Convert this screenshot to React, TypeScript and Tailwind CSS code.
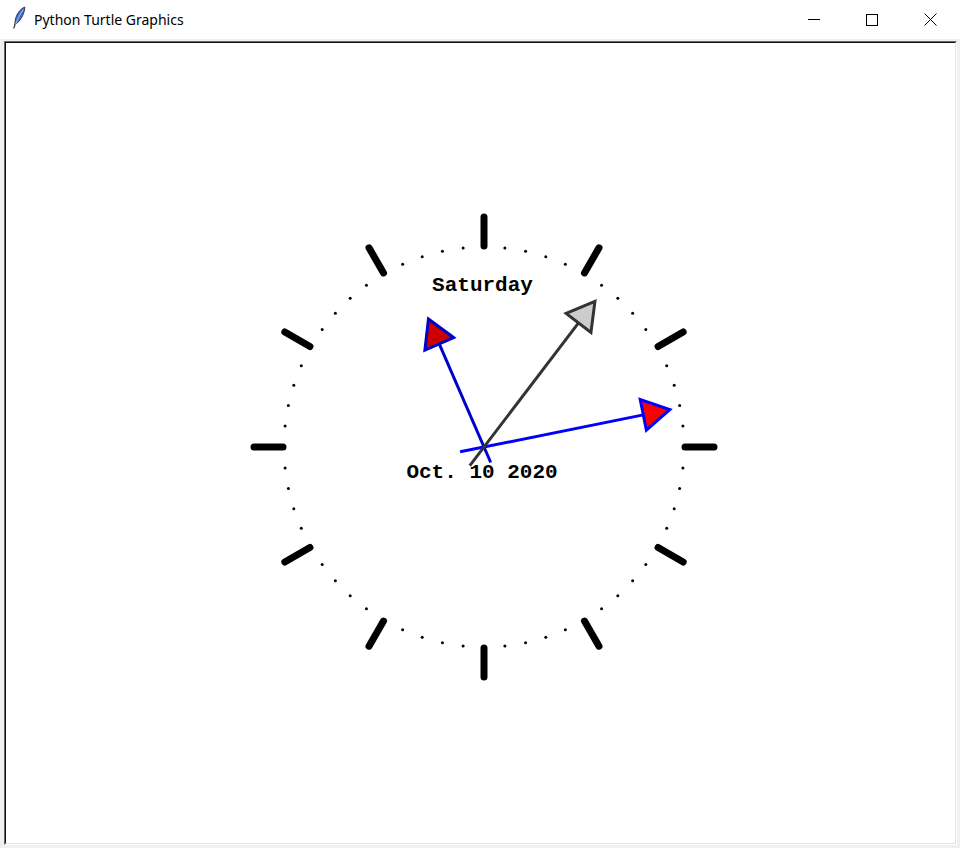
import React from "react";

const cx = 484;
const cy = 447;

type Hand = {
  angle: number;
  length: number;
  fill: string;
  outline: string;
};

// 11:13:06 on the face
const hands: Hand[] = [
  { angle: 336.55, length: 112.5, fill: "#cd0000", outline: "#0000cd" },
  { angle: 78.6, length: 162.5, fill: "#ff0000", outline: "#0000ff" },
  { angle: 37.3, length: 156, fill: "#cccccc", outline: "#333333" },
];

const tip = 31.25;

function HandShape({ hand }: { hand: Hand }) {
  const rad = (hand.angle * Math.PI) / 180;
  const dx = Math.sin(rad);
  const dy = -Math.cos(rad);
  const px = Math.cos(rad);
  const py = Math.sin(rad);
  const tailX = cx - hand.length * 0.15 * dx;
  const tailY = cy - hand.length * 0.15 * dy;
  const midX = cx + hand.length * dx;
  const midY = cy + hand.length * dy;
  const h = (tip * Math.sqrt(3)) / 2;
  const pts = [
    [midX + (tip / 2) * px, midY + (tip / 2) * py],
    [midX + h * dx, midY + h * dy],
    [midX - (tip / 2) * px, midY - (tip / 2) * py],
  ]
    .map((p) => p.join(","))
    .join(" ");

  return (
    <g stroke={hand.outline} strokeWidth={3}>
      <line x1={tailX} y1={tailY} x2={midX} y2={midY} />
      <polygon points={pts} fill={hand.fill} strokeLinejoin="miter" />
    </g>
  );
}

function ClockFace() {
  const marks = [];
  for (let i = 0; i < 60; i++) {
    const rad = (i * 6 * Math.PI) / 180;
    const sx = Math.sin(rad);
    const sy = -Math.cos(rad);
    if (i % 5 === 0) {
      marks.push(
        <line
          key={i}
          x1={cx + 201 * sx}
          y1={cy + 201 * sy}
          x2={cx + 230 * sx}
          y2={cy + 230 * sy}
          stroke="#000"
          strokeWidth={7}
          strokeLinecap="round"
        />
      );
    } else {
      marks.push(<circle key={i} cx={cx + 200 * sx} cy={cy + 200 * sy} r={1.5} fill="#000" />);
    }
  }
  return <g>{marks}</g>;
}

function Feather() {
  return (
    <svg width="14" height="24" viewBox="0 0 14 24" className="shrink-0">
      <path
        d="M12.8 1 C8 3 4.2 8.5 3.2 14.5 L2.8 19 L5.2 17 C9.6 12.8 12.6 7 12.8 1 Z"
        fill="#3d6fc4"
        stroke="#23385e"
        strokeWidth="1"
      />
      <path d="M11.4 3.5 C8.2 8 5.4 13 3.4 19" stroke="#c9d8f2" strokeWidth="0.8" fill="none" />
      <path d="M3.2 18.5 L1.6 22.5" stroke="#333" strokeWidth="1.2" />
    </svg>
  );
}

export default function App() {
  return (
    <div className="flex h-[848px] w-[960px] flex-col bg-white">
      <div className="flex h-[39px] shrink-0 items-center bg-white">
        <div className="ml-[12px] mt-[-3px]">
          <Feather />
        </div>
        <span
          className="ml-[8px] text-[14px] text-black"
          style={{ fontFamily: '"Noto Sans", "Open Sans", sans-serif' }}
        >
          Python Turtle Graphics
        </span>
        <div className="ml-auto flex h-full">
          <div className="flex h-full w-[58px] items-center justify-center">
            <div className="h-px w-[12px] bg-black" />
          </div>
          <div className="flex h-full w-[58px] items-center justify-center">
            <div className="h-[12px] w-[12px] border border-black" />
          </div>
          <div className="flex h-full w-[59px] items-center justify-center">
            <svg width="13" height="13" viewBox="0 0 13 13">
              <path d="M0.5 0.5 L12.5 12.5 M12.5 0.5 L0.5 12.5" stroke="#000" strokeWidth="1" />
            </svg>
          </div>
        </div>
      </div>
      <div className="flex flex-1 bg-[#f0f0f0] pb-[3px] pl-[4px] pr-[3px] pt-[2px]">
        <div className="flex flex-1 border-b border-l border-r border-t border-b-white border-l-[#696969] border-r-white border-t-[#696969]">
          <div className="relative flex-1 overflow-hidden border-b border-l border-r border-t border-b-[#e3e3e3] border-l-[#101010] border-r-[#e3e3e3] border-t-[#101010] bg-white">
            <svg className="absolute inset-0 h-full w-full">
              <g transform="translate(-6 -43)">
                <ClockFace />
                <text
                  x={482.5}
                  y={291}
                  textAnchor="middle"
                  fontSize={21}
                  fontWeight="bold"
                  fill="#000"
                  style={{ fontFamily: '"Liberation Mono", monospace' }}
                >
                  Saturday
                </text>
                <text
                  x={482}
                  y={478}
                  textAnchor="middle"
                  fontSize={21}
                  fontWeight="bold"
                  fill="#000"
                  style={{ fontFamily: '"Liberation Mono", monospace' }}
                >
                  Oct. 10 2020
                </text>
                {hands.map((h, i) => (
                  <HandShape key={i} hand={h} />
                ))}
              </g>
            </svg>
          </div>
        </div>
      </div>
    </div>
  );
}
